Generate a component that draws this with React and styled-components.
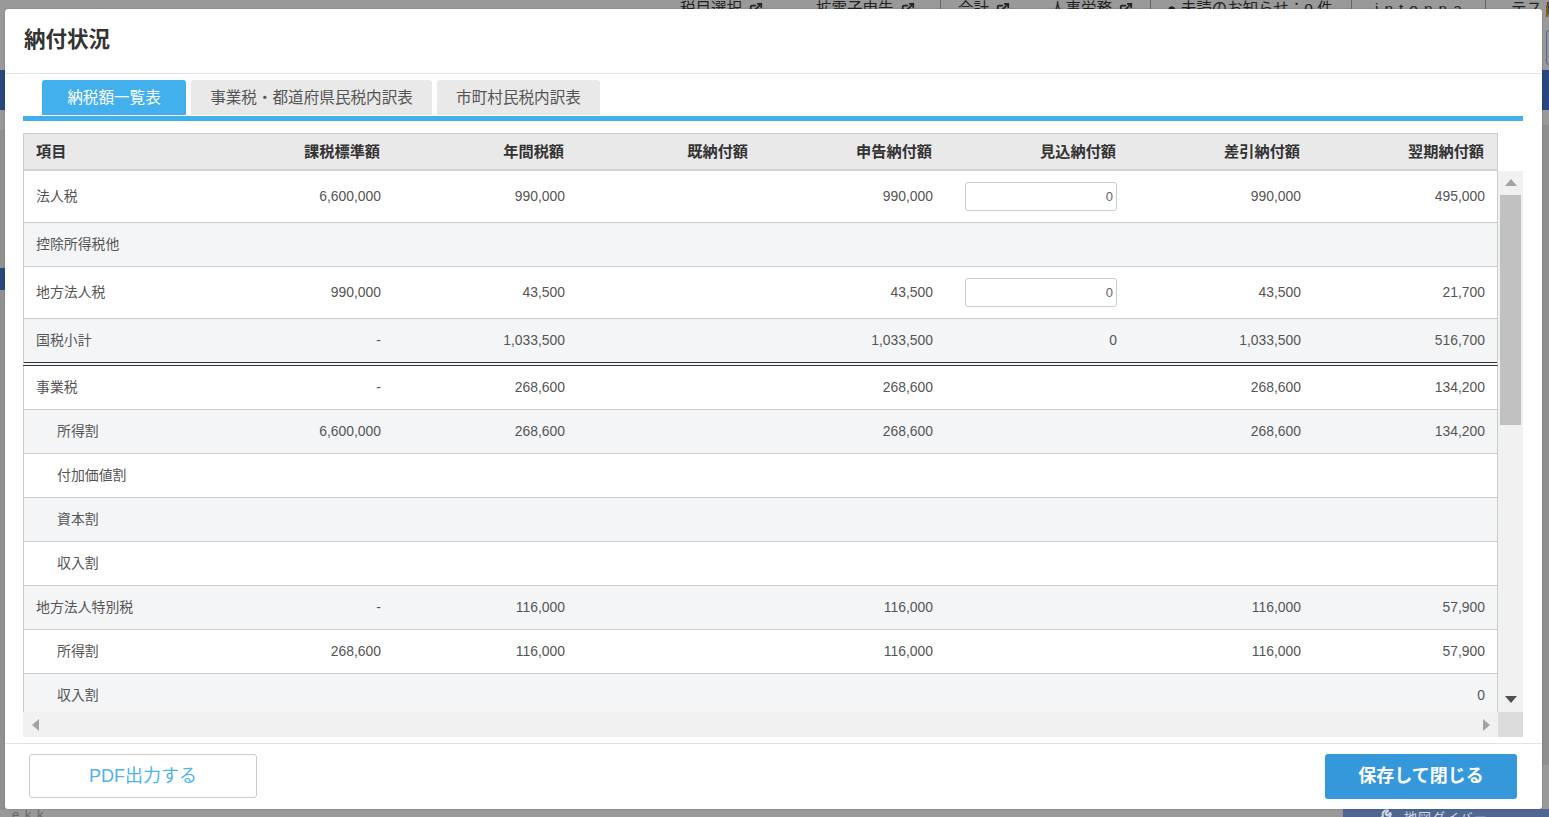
import React from 'react';
import styled, { createGlobalStyle } from 'styled-components';
import { ExternalLink, Wrench } from 'lucide-react';

const FONT = '"Liberation Sans", "Noto Sans CJK JP", sans-serif';

const Global = createGlobalStyle`
  html, body { margin: 0; padding: 0; height: 100%; overflow: hidden; background: #999; }
  * { box-sizing: border-box; }
`;

const Page = styled.div`
  position: relative;
  width: 1549px;
  height: 817px;
  background: #999;
  overflow: hidden;
  font-family: ${FONT};
`;

const TopNav = styled.div`
  position: absolute;
  top: 0;
  left: 680px;
  display: flex;
  align-items: flex-start;
  height: 20px;
  font-size: 15.5px;
  line-height: 18px;
  color: #222;
  white-space: nowrap;
`;

const NavItem = styled.span`
  width: ${p => p.$w}px;
  height: 20px;
  padding-left: ${p => p.$pad || 0}px;
  display: flex;
  align-items: flex-start;
  gap: 7px;
  border-right: ${p => (p.$sep ? '1px solid #666' : 'none')};
  letter-spacing: ${p => p.$spread || 0}px;
  svg { margin-top: 2px; flex: none; }
`;

const BackBlock = styled.div`
  position: absolute;
  left: ${p => (p.$left === undefined ? 'auto' : `${p.$left}px`)};
  right: ${p => (p.$right === undefined ? 'auto' : `${p.$right}px`)};
  top: ${p => p.$top}px;
  width: ${p => p.$w}px;
  height: ${p => p.$h}px;
  background: ${p => p.$bg};
  border: ${p => p.$line || 'none'};
  border-radius: ${p => p.$radius || 0}px;
`;

const BottomText = styled.span`
  position: absolute;
  left: ${p => p.$left}px;
  top: 807px;
  display: flex;
  align-items: center;
  gap: 12px;
  font-size: 13px;
  letter-spacing: 1px;
  color: ${p => p.$color};
  white-space: nowrap;
`;

const Modal = styled.div`
  position: absolute;
  left: 5px;
  top: 9px;
  width: 1537px;
  height: 800px;
  background: #fff;
  border-radius: 3px;
  box-shadow: 0 0 2px rgba(0, 0, 0, 0.25);
  display: flex;
  flex-direction: column;
`;

const Header = styled.header`
  height: 65px;
  flex: none;
  display: flex;
  align-items: center;
  padding: 0 0 8px 19px;
  border-bottom: 1px solid #e4e4e4;
`;

const Title = styled.h1`
  margin: 0;
  font-size: 21.5px;
  font-weight: 700;
  color: #333;
`;

const Body = styled.div`
  flex: 1;
  min-height: 0;
  padding: 6px 19px 6px 18px;
  display: flex;
  flex-direction: column;
`;

const Tabs = styled.div`
  display: flex;
  gap: 5px;
  height: 41px;
  flex: none;
  padding: 0 0 1px 19px;
  border-bottom: 5px solid #42b0ec;
`;

const Tab = styled.div`
  width: ${p => p.$w}px;
  height: 35px;
  padding-bottom: 4px;
  display: flex;
  align-items: center;
  justify-content: center;
  font-size: 15.6px;
  border-radius: 3px 3px 0 0;
  background: ${p => (p.$active ? '#42b0ec' : '#e9e9e9')};
  color: ${p => (p.$active ? '#fff' : '#555')};
`;

const TableFrame = styled.div`
  margin-top: 12px;
  flex: 1;
  min-height: 0;
  display: flex;
  flex-direction: column;
`;

const Grid = styled.table`
  width: 1475px;
  table-layout: fixed;
  border-collapse: separate;
  border-spacing: 0;
`;

const HeadCell = styled.th`
  height: 38px;
  padding: 0 13px 3px ${p => (p.$first ? '12px' : '0')};
  background: #e9e9e9;
  border-top: 1px solid #ccc;
  border-bottom: 2px solid #d2d2d2;
  ${p => (p.$first ? 'border-left: 1px solid #ccc;' : '')}
  ${p => (p.$last ? 'border-right: 1px solid #ccc;' : '')}
  font-size: 15.2px;
  font-weight: 700;
  color: #333;
  text-align: ${p => (p.$first ? 'left' : 'right')};
`;

const ScrollRow = styled.div`
  flex: 1;
  min-height: 0;
  display: flex;
`;

const RowsClip = styled.div`
  width: 1475px;
  flex: none;
  overflow: hidden;
`;

const Row = styled.tr`
  height: ${p => p.$h}px;
  background: ${p => (p.$alt ? '#f4f5f7' : '#fff')};
`;

const Cell = styled.td`
  padding: 0 12px ${p => (p.$first ? '4px' : '2px')} ${p => (p.$first ? (p.$indent ? '33px' : '12px') : '0')};
  ${p => (p.$first ? 'border-left: 1px solid #ccc;' : '')}
  ${p => (p.$last ? 'border-right: 1px solid #ccc;' : '')}
  border-bottom: ${p => (p.$double ? '4px double #333' : p.$noLine ? 'none' : '1px solid #ccc')};
  font-size: 13.9px;
  color: #555;
  text-align: ${p => (p.$first ? 'left' : 'right')};
  white-space: nowrap;
`;

const AmountInput = styled.input`
  display: block;
  margin: 2px 0 0 auto;
  width: 152px;
  height: 29px;
  padding: 0 3px 0 0;
  border: 1px solid #ccc;
  border-radius: 3px;
  background: #fff;
  font-family: ${FONT};
  font-size: 13px;
  color: #666;
  text-align: right;
  outline: none;
`;

const VBar = styled.div`
  width: 25px;
  flex: none;
  background: #f1f1f1;
  display: flex;
  flex-direction: column;
  align-items: center;
  padding: 8px 0 9px;
`;

const VThumb = styled.div`
  width: 21px;
  height: 230px;
  margin-top: 9px;
  background: #c1c1c1;
`;

const Spacer = styled.div`
  flex: 1;
`;

const HBar = styled.div`
  height: 25px;
  flex: none;
  display: flex;
`;

const HTrack = styled.div`
  width: 1475px;
  background: #f1f1f1;
  display: flex;
  align-items: center;
  justify-content: space-between;
  padding: 0 8px 0 9px;
`;

const Corner = styled.div`
  width: 25px;
  background: #dcdcdc;
`;

const Footer = styled.footer`
  height: 66px;
  flex: none;
  border-top: 1px solid #e4e4e4;
  padding: 10px 25px 0 24px;
  display: flex;
  justify-content: space-between;
  align-items: flex-start;
`;

const PdfButton = styled.button`
  width: 228px;
  height: 44px;
  padding: 0 0 4px;
  background: #fff;
  border: 1px solid #ccc;
  border-radius: 3px;
  font-family: ${FONT};
  font-size: 18px;
  color: #4db4ec;
`;

const SaveButton = styled.button`
  width: 192px;
  height: 45px;
  padding: 0 0 5px;
  background: #3498db;
  border: none;
  border-radius: 3px;
  font-family: ${FONT};
  font-size: 18px;
  font-weight: 700;
  color: #fff;
`;

const Arrow = ({ dir, color }) => {
  const pts = {
    up: '0,7 12,7 6,0',
    down: '0,0 12,0 6,7',
    left: '7,0 7,12 0,6',
    right: '0,0 0,12 7,6',
  }[dir];
  const vertical = dir === 'up' || dir === 'down';
  return (
    <svg width={vertical ? 12 : 7} height={vertical ? 7 : 12} style={{ display: 'block', flex: 'none' }}>
      <polygon points={pts} fill={color} />
    </svg>
  );
};

const columns = ['項目', '課税標準額', '年間税額', '既納付額', '申告納付額', '見込納付額', '差引納付額', '翌期納付額'];

const rows = [
  { h: 52, cells: ['法人税', '6,600,000', '990,000', '', '990,000', 'input', '990,000', '495,000'] },
  { h: 44, cells: ['控除所得税他', '', '', '', '', '', '', ''] },
  { h: 52, cells: ['地方法人税', '990,000', '43,500', '', '43,500', 'input', '43,500', '21,700'] },
  { h: 47, double: true, cells: ['国税小計', '-', '1,033,500', '', '1,033,500', '0', '1,033,500', '516,700'] },
  { h: 44, cells: ['事業税', '-', '268,600', '', '268,600', '', '268,600', '134,200'] },
  { h: 44, indent: true, cells: ['所得割', '6,600,000', '268,600', '', '268,600', '', '268,600', '134,200'] },
  { h: 44, indent: true, cells: ['付加価値割', '', '', '', '', '', '', ''] },
  { h: 44, indent: true, cells: ['資本割', '', '', '', '', '', '', ''] },
  { h: 44, indent: true, cells: ['収入割', '', '', '', '', '', '', ''] },
  { h: 44, cells: ['地方法人特別税', '-', '116,000', '', '116,000', '', '116,000', '57,900'] },
  { h: 44, indent: true, cells: ['所得割', '268,600', '116,000', '', '116,000', '', '116,000', '57,900'] },
  { h: 44, indent: true, noLine: true, cells: ['収入割', '', '', '', '', '', '', '0'] },
];

const Cols = () => (
  <colgroup>
    <col style={{ width: 186 }} />
    {columns.slice(1).map((c, i) => (
      <col key={c} style={{ width: i === 6 ? 185 : 184 }} />
    ))}
  </colgroup>
);

const NavIcon = () => <ExternalLink size={14} strokeWidth={3} />;

export default function App() {
  return (
    <Page>
      <Global />
      <TopNav>
        <NavItem $w={136}>税目選択<NavIcon /></NavItem>
        <NavItem $w={125} $sep>拡電子申告<NavIcon /></NavItem>
        <NavItem $w={92} $pad={17}>会計<NavIcon /></NavItem>
        <NavItem $w={118} $sep $pad={17}>人事労務<NavIcon /></NavItem>
        <NavItem $w={201} $sep $pad={16}>● 未読のお知らせ：0 件</NavItem>
        <NavItem $w={134} $pad={23} $spread={6} $sep>intonna</NavItem>
        <NavItem $w={42} $pad={25}>テスト</NavItem>
      </TopNav>
      <BackBlock $left={0} $top={70} $w={5} $h={40} $bg="#27477f" />
      <BackBlock $left={0} $top={130} $w={5} $h={680} $bg="#909090" />
      <BackBlock $left={0} $top={268} $w={5} $h={22} $bg="#27477f" />
      <BackBlock $right={0} $top={70} $w={7} $h={40} $bg="#27477f" />
      <BackBlock $right={0} $top={125} $w={7} $h={640} $bg="#8f8f8f" />
      <BackBlock $right={1} $top={5} $w={2} $h={12} $bg="#8a5a14" />
      <BackBlock $right={-6} $top={30} $w={9} $h={35} $bg="transparent" $line="1px solid #4e6690" $radius={3} />
      <BackBlock $right={0} $top={809} $w={206} $h={8} $bg="#4e6690" />
      <BottomText $left={12} $color="#666">e k k</BottomText>
      <BottomText $left={1376} $color="#cdd5e2"><Wrench size={16} strokeWidth={3} />地図ダイバー</BottomText>
      <Modal>
        <Header>
          <Title>納付状況</Title>
        </Header>
        <Body>
          <Tabs>
            <Tab $w={144} $active>納税額一覧表</Tab>
            <Tab $w={241}>事業税・都道府県民税内訳表</Tab>
            <Tab $w={163}>市町村民税内訳表</Tab>
          </Tabs>
          <TableFrame>
            <Grid>
              <Cols />
              <thead>
                <tr>
                  {columns.map((c, i) => (
                    <HeadCell key={c} $first={i === 0} $last={i === columns.length - 1}>{c}</HeadCell>
                  ))}
                </tr>
              </thead>
            </Grid>
            <ScrollRow>
              <RowsClip>
                <Grid>
                  <Cols />
                  <tbody>
                    {rows.map((r, ri) => (
                      <Row key={ri} $h={r.h} $alt={ri % 2 === 1}>
                        {r.cells.map((c, ci) => (
                          <Cell
                            key={ci}
                            $first={ci === 0}
                            $last={ci === r.cells.length - 1}
                            $indent={r.indent}
                            $double={r.double}
                            $noLine={r.noLine}
                          >
                            {c === 'input' ? <AmountInput readOnly defaultValue="0" /> : c}
                          </Cell>
                        ))}
                      </Row>
                    ))}
                  </tbody>
                </Grid>
              </RowsClip>
              <VBar>
                <Arrow dir="up" color="#a3a3a3" />
                <VThumb />
                <Spacer />
                <Arrow dir="down" color="#505050" />
              </VBar>
            </ScrollRow>
            <HBar>
              <HTrack>
                <Arrow dir="left" color="#a3a3a3" />
                <Arrow dir="right" color="#a3a3a3" />
              </HTrack>
              <Corner />
            </HBar>
          </TableFrame>
        </Body>
        <Footer>
          <PdfButton>PDF出力する</PdfButton>
          <SaveButton>保存して閉じる</SaveButton>
        </Footer>
      </Modal>
    </Page>
  );
}
